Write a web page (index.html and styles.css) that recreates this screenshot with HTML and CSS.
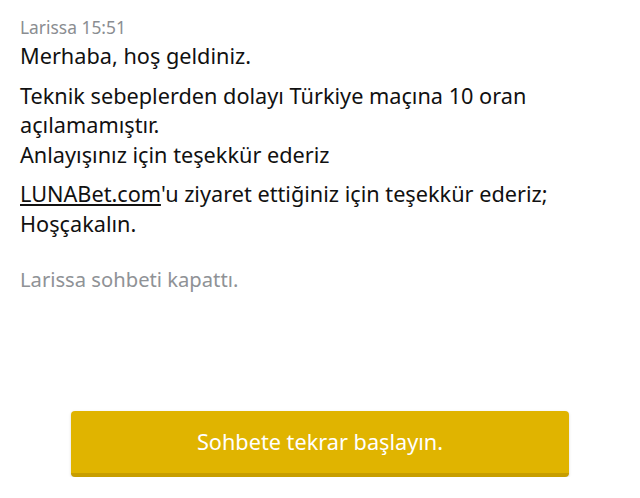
FILE: index.html
```html
<!DOCTYPE html>
<html lang="tr">
<head>
<meta charset="utf-8">
<link rel="stylesheet" href="styles.css">
</head>
<body>
<div class="chat">
  <div class="meta">Larissa 15:51</div>
  <p class="msg first">Merhaba, hoş geldiniz.</p>
  <p class="msg">Teknik sebeplerden dolayı Türkiye maçına 10 oran açılamamıştır.<br>Anlayışınız için teşekkür ederiz</p>
  <p class="msg"><span><a class="link" href="#">LUNABet.com</a></span><span>'u ziyaret ettiğiniz için teşekkür ederiz; Hoşçakalın.</span></p>
  <p class="closed">Larissa sohbeti kapattı.</p>
</div>
<div class="actions">
  <button class="restart">Sohbete tekrar başlayın.</button>
</div>
</body>
</html>
```

FILE: styles.css
```css
html, body {
  margin: 0;
  padding: 0;
  background: #fff;
  font-family: "Noto Sans", "Open Sans", sans-serif;
}
.chat {
  padding: 16px 20px 0 20px;
  width: 560px;
}
.meta {
  font-size: 17.4px;
  line-height: 22px;
  color: #8a8d91;
}
.msg {
  margin: 10px 0 0;
  font-size: 21.7px;
  line-height: 29.5px;
  color: #111;
}
.msg.first {
  margin-top: 3px;
}
.link {
  color: #111;
  text-decoration: underline;
}
.closed {
  margin: 27px 0 0;
  font-size: 20.2px;
  line-height: 29.5px;
  color: #8f9296;
}
.actions {
  display: flex;
  justify-content: center;
  padding-top: 116px;
}
.restart {
  width: 498px;
  height: 66px;
  border: none;
  border-bottom: 4px solid #c79e00;
  border-radius: 4px;
  background: #e0b400;
  color: #fff;
  font-family: inherit;
  font-size: 21.7px;
  padding: 0;
  box-shadow: 0 1px 3px rgba(0,0,0,0.15);
}
```
